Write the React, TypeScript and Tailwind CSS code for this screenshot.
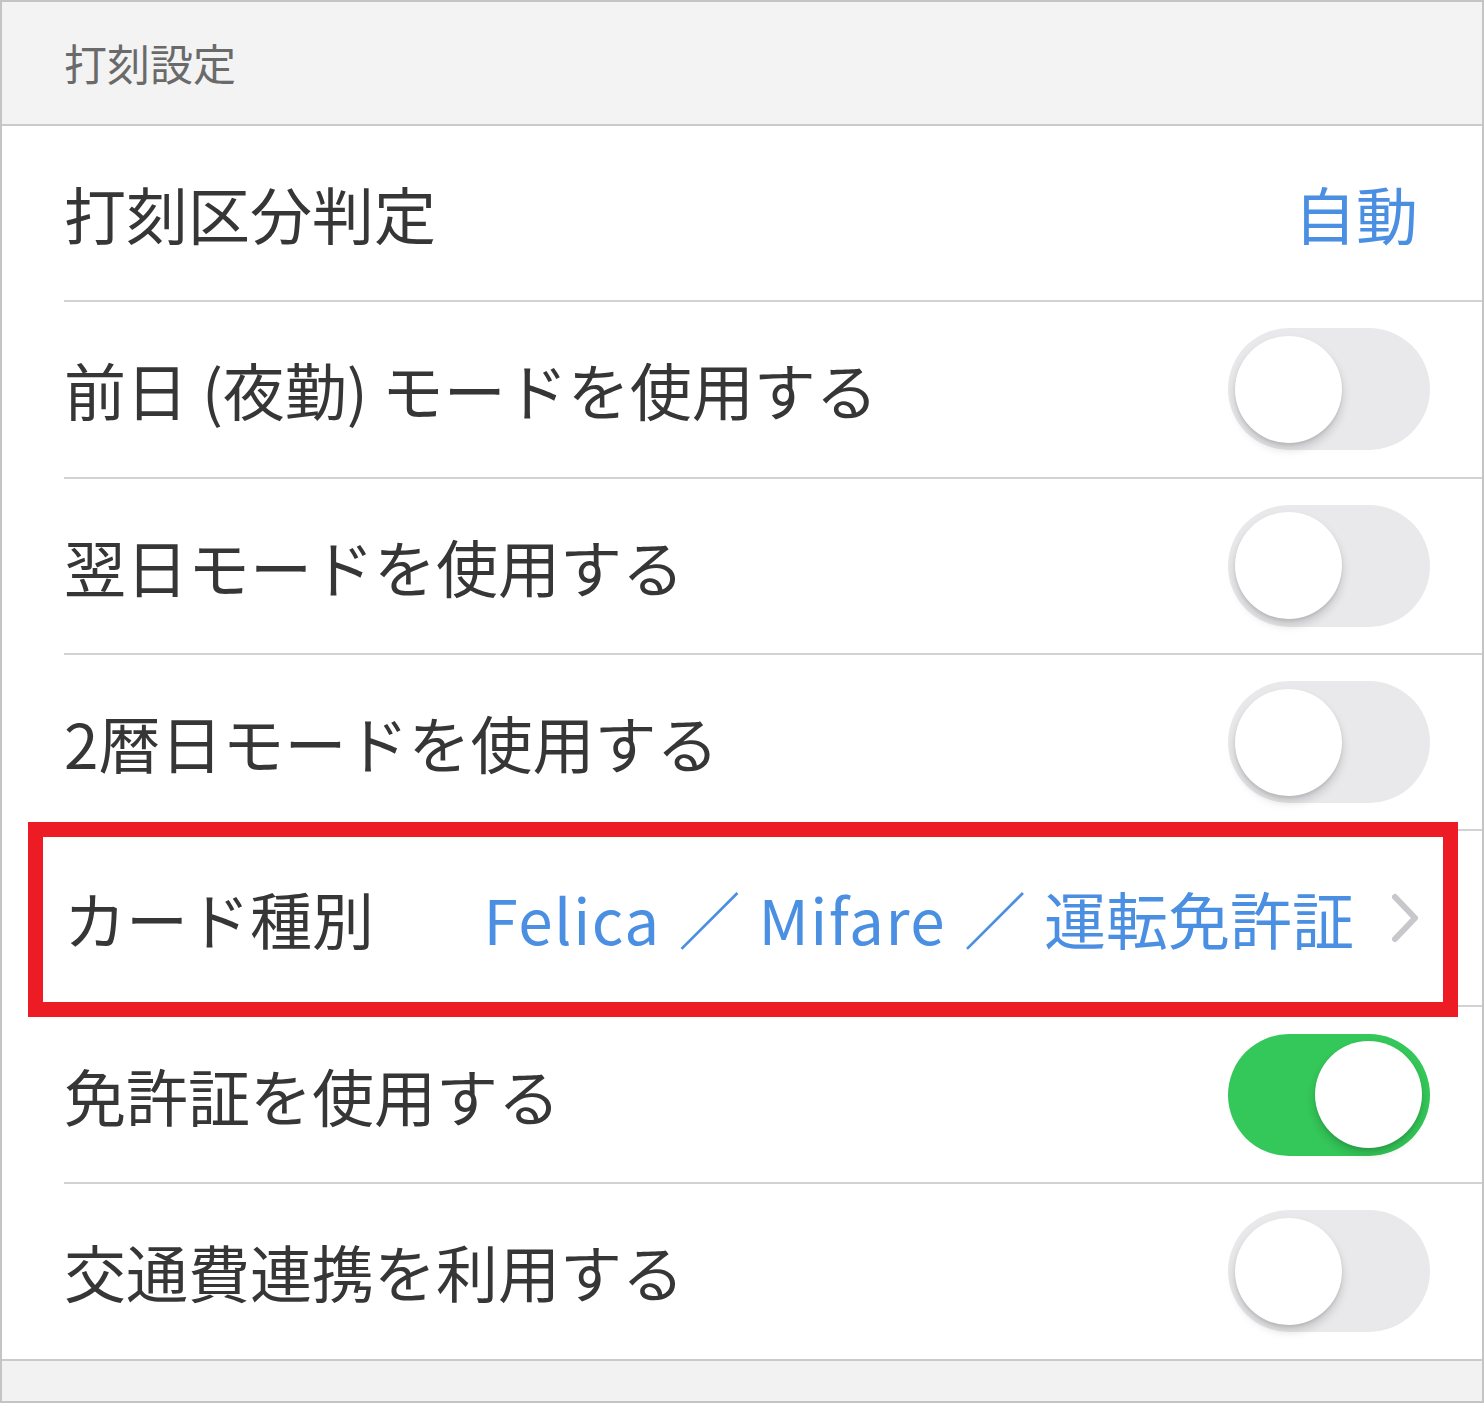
const font = { fontFamily: '"Noto Sans CJK JP", "Noto Sans", sans-serif' };

type Row =
  | { kind: "value"; label: string; value: string }
  | { kind: "toggle"; label: string; on: boolean }
  | { kind: "link"; label: string };

const rows: Row[] = [
  { kind: "value", label: "打刻区分判定", value: "自動" },
  { kind: "toggle", label: "前日 (夜勤) モードを使用する", on: false },
  { kind: "toggle", label: "翌日モードを使用する", on: false },
  { kind: "toggle", label: "2暦日モードを使用する", on: false },
  { kind: "link", label: "カード種別" },
  { kind: "toggle", label: "免許証を使用する", on: true },
  { kind: "toggle", label: "交通費連携を利用する", on: false },
];

function Toggle({ on }: { on: boolean }) {
  return (
    <div
      className={
        on
          ? "flex h-[122px] w-[202px] items-center justify-end rounded-full bg-[#34c759] px-[8px]"
          : "flex h-[122px] w-[202px] items-center justify-start rounded-full bg-[#e9e9eb] px-[7px]"
      }
    >
      <div className="h-[107px] w-[107px] rounded-full bg-white shadow-[0_6px_10px_rgba(0,0,0,0.16),0_2px_3px_rgba(0,0,0,0.08)]" />
    </div>
  );
}

function Chevron() {
  return (
    <svg width="30" height="50" viewBox="0 0 30 50" className="shrink-0">
      <polyline points="5,4 25,25 5,46" fill="none" stroke="#c7c7cc" strokeWidth="6" strokeLinecap="round" strokeLinejoin="round" />
    </svg>
  );
}

export default function App() {
  return (
    <div className="flex h-[1403px] w-[1484px] flex-col border-2 border-[#c4c4c4] bg-[#f2f2f2]" style={font}>
      <div className="flex h-[124px] shrink-0 items-center border-b-2 border-[#cacaca] bg-[#f3f3f3] pb-[2px] pl-[62px] text-[43px] text-[#6a6a6a]">
        打刻設定
      </div>
      <div className="flex flex-col border-b-2 border-[#cacaca] bg-white">
        {rows.map((row, i) => (
          <div key={row.label} className="relative pl-[62px]">
            <div
              className={
                i < rows.length - 1
                  ? "flex h-[176.3px] items-center justify-between border-b-2 border-[#d2d2d2]"
                  : "flex h-[175px] items-center justify-between"
              }
            >
              <span className="whitespace-pre text-[62px] leading-none text-[#363636]">{row.label}</span>
              {row.kind === "value" ? (
                <span className="pr-[64px] text-[62px] leading-none text-[#4a8fe2]">{row.value}</span>
              ) : row.kind === "toggle" ? (
                <div className="pr-[52px]">
                  <Toggle on={row.on} />
                </div>
              ) : (
                <div className="flex items-center gap-[36px] pr-[62px]">
                  <span className="whitespace-pre text-[62px] leading-none text-[#4a8fe2] [word-spacing:4px]">
                    <span className="tracking-[1.5px]">Felica</span> ／ <span className="tracking-[1.5px]">Mifare</span> ／ 運転免許証
                  </span>
                  <Chevron />
                </div>
              )}
            </div>
            {row.kind === "link" ? (
              <div className="pointer-events-none absolute left-[26px] top-[-9px] h-[195px] w-[1430px] border-[15px] border-[#ed1c24]" />
            ) : null}
          </div>
        ))}
      </div>
    </div>
  );
}
